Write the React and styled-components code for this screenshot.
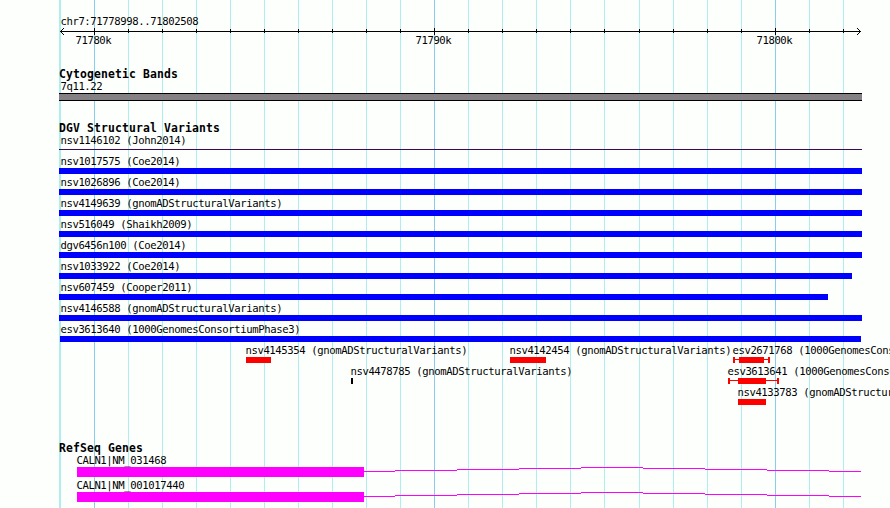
import React from "react";
import styled, { createGlobalStyle } from "styled-components";

const GlobalStyle = createGlobalStyle`
  body { margin: 0; background: #fdfffd; overflow: hidden; }
`;

const MINOR = "#afeeee";
const MAJOR = "#87ceeb";

const Browser = styled.main`
  position: relative;
  display: flex;
  flex-direction: column;
  width: 890px;
  height: 508px;
  overflow: hidden;
  background: #fdfffd;
  color: #000;
`;

const GridLayer = styled.svg`
  position: absolute;
  inset: 0;
  shape-rendering: crispEdges;
`;

const Content = styled.div`
  position: relative;
  display: flex;
  flex-direction: column;
`;

const Label = styled.div`
  height: 14px;
  padding-left: ${(p) => (p.$indent || 0) + 0.4}px;
  font: 10.6px/14px "DejaVu Sans Mono", "Liberation Mono", monospace;
  letter-spacing: -0.382px;
  white-space: pre;
`;

const Ruler = styled.header`
  display: flex;
  flex-direction: column;
  height: 67px;
  padding-top: 14px;
  box-sizing: border-box;
`;

const RulerAxis = styled.svg`
  display: block;
  width: 890px;
  height: 7px;
  shape-rendering: crispEdges;
`;

const RulerScale = styled.div`
  display: grid;
  margin-top: -2px;
`;

const ScaleLabel = styled(Label)`
  grid-area: 1 / 1;
  justify-self: start;
  margin-left: ${(p) => p.$x}px;
`;

const Track = styled.section`
  display: flex;
  flex-direction: column;
  height: ${(p) => p.$height}px;
`;

const TrackTitle = styled.h2`
  flex: none;
  height: 12px;
  margin: 0 0 0 59px;
  font: bold 11.4px/15px "DejaVu Sans Mono", "Liberation Mono", monospace;
  letter-spacing: 0.137px;
  white-space: pre;
`;

const Row = styled.div`
  flex: none;
  display: grid;
  height: ${(p) => p.$height || 21}px;
`;

const Feature = styled.div`
  grid-area: 1 / 1;
  justify-self: start;
  display: flex;
  flex-direction: column;
  margin-left: ${(p) => p.$x}px;
`;

const Bar = styled.div`
  width: ${(p) => p.$width}px;
  height: ${(p) => p.$height || 6}px;
  margin-top: ${(p) => p.$gap || 0}px;
  background: ${(p) => p.$color};
`;

const Band = styled.div`
  box-sizing: border-box;
  width: 803px;
  height: 8px;
  border: solid #000;
  border-width: 1px 0;
  background: #848084;
`;

const Range = styled.div`
  display: flex;
  align-items: flex-start;
`;

const Whisker = styled.div`
  width: ${(p) => p.$width}px;
  height: 1px;
  margin-top: 2px;
  background: #f00;
`;

const Gene = styled.div`
  display: flex;
`;

const Intron = styled.svg`
  display: block;
  width: 497px;
  height: 10px;
  shape-rendering: crispEdges;
`;

const gridXs = [94, 128, 162, 196, 230, 264, 298, 332, 366, 400, 434, 468,
  502, 536, 570, 604, 639, 673, 707, 741, 775, 809, 843];
const isMajor = (x) => x === 94 || x === 434 || x === 775;

const variants = [
  { name: "nsv1017575 (Coe2014)" },
  { name: "nsv1026896 (Coe2014)" },
  { name: "nsv4149639 (gnomADStructuralVariants)" },
  { name: "nsv516049 (Shaikh2009)" },
  { name: "dgv6456n100 (Coe2014)" },
  { name: "nsv1033922 (Coe2014)", end: 852 },
  { name: "nsv607459 (Cooper2011)", end: 828 },
  { name: "nsv4146588 (gnomADStructuralVariants)" },
  { name: "esv3613640 (1000GenomesConsortiumPhase3)", start: 60, end: 861 },
];

const smallRows = [
  [
    { name: "nsv4145354 (gnomADStructuralVariants)", x: 246, width: 25 },
    { name: "nsv4142454 (gnomADStructuralVariants)", x: 510, width: 36 },
    { name: "esv2671768 (1000GenomesConsortiumPhase3)", x: 733, range: [4, 25, 4] },
  ],
  [
    { name: "nsv4478785 (gnomADStructuralVariants)", x: 351, width: 2, color: "#000" },
    { name: "esv3613641 (1000GenomesConsortiumPhase3)", x: 728, range: [8, 28, 11] },
  ],
  [{ name: "nsv4133783 (gnomADStructuralVariants)", x: 738, width: 28 }],
];

const intronSteps = [[0, 31, 4], [31, 62, 3], [93, 62, 2], [155, 62, 1],
  [217, 62, 0], [279, 62, 1], [341, 62, 2], [403, 62, 3], [465, 32, 4]];

function ConfidenceRange({ parts: [before, core, after] }) {
  return (
    <Range>
      <Bar $width={2} $color="#f00" />
      <Whisker $width={before} />
      <Bar $width={core} $color="#f00" />
      <Whisker $width={after} />
      <Bar $width={2} $color="#f00" />
    </Range>
  );
}

const SmallLabel = styled(Label)`
  margin-left: -1px;
`;

export default function App() {
  return (
    <Browser>
      <GlobalStyle />
      <GridLayer width="890" height="508">
        <rect x="59" y="0" width="2" height="508" fill={MINOR} />
        {gridXs.map((x) => (
          <rect key={x} x={x} y="0" width="1" height="508" fill={isMajor(x) ? MAJOR : MINOR} />
        ))}
      </GridLayer>
      <Content>
        <Ruler>
          <Label $indent={60}>chr7:71778998..71802508</Label>
          <RulerAxis>
            <rect x="60" y="3" width="801" height="1" />
            {[1, 2, 3].map((d) => (
              <React.Fragment key={d}>
                <rect x={60 + d} y={3 - d} width="1" height="1" />
                <rect x={60 + d} y={3 + d} width="1" height="1" />
                <rect x={860 - d} y={3 - d} width="1" height="1" />
                <rect x={860 - d} y={3 + d} width="1" height="1" />
              </React.Fragment>
            ))}
            {gridXs.map((x) => (
              <rect key={x} x={x} y={isMajor(x) ? 0 : 1} width="1" height={isMajor(x) ? 7 : 4} />
            ))}
          </RulerAxis>
          <RulerScale>
            <ScaleLabel $x={75}>71780k</ScaleLabel>
            <ScaleLabel $x={415}>71790k</ScaleLabel>
            <ScaleLabel $x={756}>71800k</ScaleLabel>
          </RulerScale>
        </Ruler>

        <Track $height={54}>
          <TrackTitle>Cytogenetic Bands</TrackTitle>
          <Row>
            <Feature $x={59}>
              <Label $indent={1}>7q11.22</Label>
              <Band />
            </Feature>
          </Row>
        </Track>

        <Track $height={320}>
          <TrackTitle>DGV Structural Variants</TrackTitle>
          <Row>
            <Feature $x={59}>
              <Label $indent={1}>nsv1146102 (John2014)</Label>
              <Bar $width={803} $height={1} $gap={2} $color="#3a0a5a" />
            </Feature>
          </Row>
          {variants.map(({ name, start = 59, end = 862 }) => (
            <Row key={name}>
              <Feature $x={start}>
                <Label $indent={60 - start}>{name}</Label>
                <Bar $width={end - start} $color="#00f" />
              </Feature>
            </Row>
          ))}
          {smallRows.map((row) => (
            <Row key={row[0].name}>
              {row.map((f) => (
                <Feature key={f.name} $x={f.x}>
                  <SmallLabel>{f.name}</SmallLabel>
                  {f.range
                    ? <ConfidenceRange parts={f.range} />
                    : <Bar $width={f.width} $color={f.color || "#f00"} />}
                </Feature>
              ))}
            </Row>
          ))}
        </Track>

        <Track $height={67}>
          <TrackTitle>RefSeq Genes</TrackTitle>
          {["CALN1|NM_031468", "CALN1|NM_001017440"].map((name) => (
            <Row key={name} $height={25}>
              <Feature $x={77}>
                <SmallLabel>{name}</SmallLabel>
                <Gene>
                  <Bar $width={287} $height={10} $color="#f0f" />
                  <Intron>
                    {intronSteps.map(([x, width, y]) => (
                      <rect key={x} x={x} y={y} width={width} height="1" fill="#f0f" />
                    ))}
                  </Intron>
                </Gene>
              </Feature>
            </Row>
          ))}
        </Track>
      </Content>
    </Browser>
  );
}
